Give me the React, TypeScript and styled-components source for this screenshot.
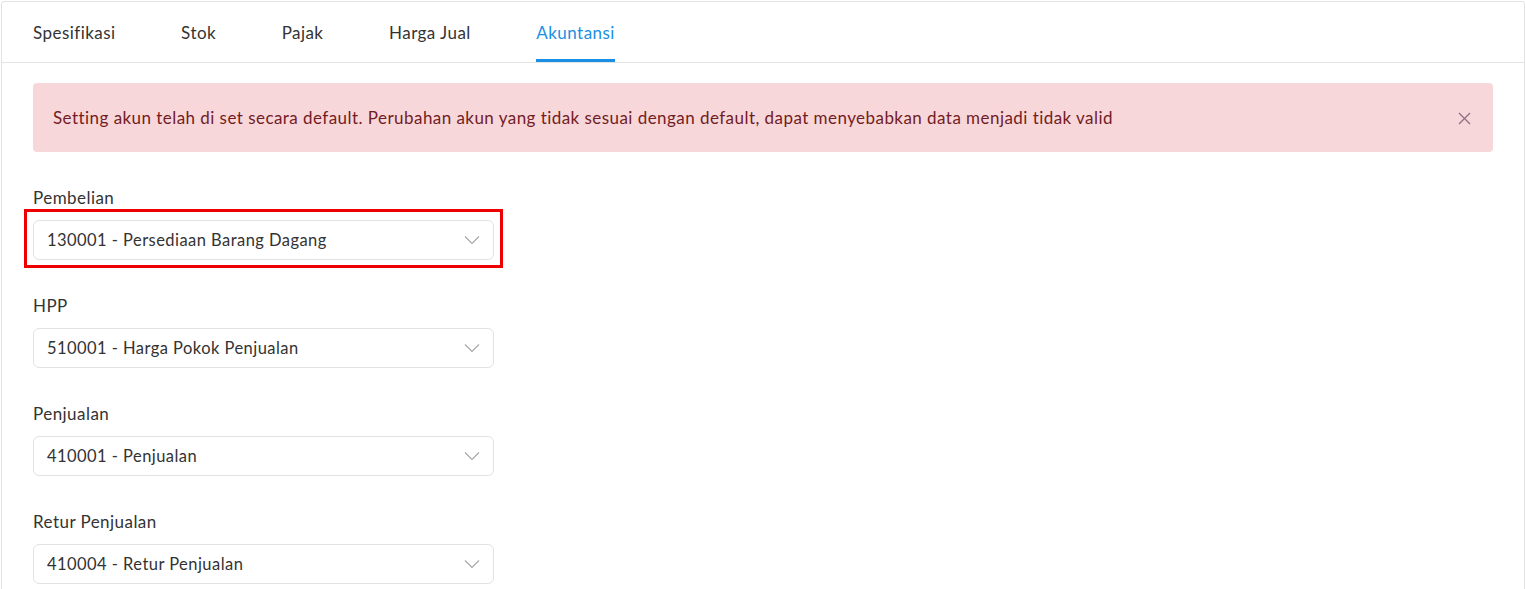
import React from "react";
import styled, { createGlobalStyle } from "styled-components";

const GlobalStyle = createGlobalStyle`
  html, body {
    margin: 0;
    padding: 0;
    background: #ffffff;
    overflow: hidden;
  }
  body {
    font-family: Lato, "Noto Sans", "Liberation Sans", sans-serif;
    color: #333333;
    letter-spacing: 0.45px;
  }
`;

const Card = styled.div`
  margin: 1px;
  border: 1px solid #e3e3e3;
  border-radius: 3px;
  height: 620px;
  background: #fff;
`;

const TabBar = styled.div`
  display: flex;
  gap: 65.6px;
  padding-left: 31px;
  height: 60px;
  border-bottom: 1px solid #e3e3e3;
`;

const Tab = styled.div<{ $active?: boolean }>`
  display: flex;
  align-items: center;
  font-size: 17px;
  color: ${(p) => (p.$active ? "#1a8fe3" : "#333333")};
  border-bottom: 3px solid ${(p) => (p.$active ? "#1a8fe3" : "transparent")};
  padding-top: 3px;
`;

const Body = styled.div`
  padding: 20px 31px 0 31px;
  display: flex;
  flex-direction: column;
  gap: 34px;
`;

const Alert = styled.div`
  display: flex;
  align-items: center;
  justify-content: space-between;
  background: #f8d7da;
  color: #721c24;
  border-radius: 4px;
  padding: 23px 22px 22px 20px;
  font-size: 17px;
  line-height: 24px;
`;

const CloseBtn = styled.span`
  display: flex;
  color: #8c6f82;
`;

const Field = styled.div`
  display: flex;
  flex-direction: column;
  gap: 10px;
  width: 461px;
`;

const Label = styled.label`
  font-size: 17px;
  line-height: 24px;
  color: #333333;
`;

const SelectWrap = styled.div`
  position: relative;
`;

const Highlight = styled.div`
  position: absolute;
  top: -11px;
  bottom: -8px;
  left: -9px;
  right: -9px;
  border: 3px solid #ee0000;
  pointer-events: none;
`;

const Select = styled.div`
  box-sizing: border-box;
  height: 40px;
  border: 1px solid #e2e2e2;
  border-radius: 6px;
  display: flex;
  align-items: center;
  justify-content: space-between;
  padding: 0 13px 0 13px;
  font-size: 16.5px;
  color: #333333;
`;

const Chevron = () => (
  <svg width="16" height="10" viewBox="0 0 16 10" fill="none">
    <path d="M1 1.5 L8 8.5 L15 1.5" stroke="#a6a6a6" strokeWidth="1.1" />
  </svg>
);

const CloseIcon = () => (
  <svg width="13" height="13" viewBox="0 0 13 13" fill="none">
    <path d="M1 1 L12 12 M12 1 L1 12" stroke="currentColor" strokeWidth="1.3" />
  </svg>
);

const tabs = ["Spesifikasi", "Stok", "Pajak", "Harga Jual", "Akuntansi"];

const fields = [
  { label: "Pembelian", value: "130001 - Persediaan Barang Dagang", marked: true },
  { label: "HPP", value: "510001 - Harga Pokok Penjualan" },
  { label: "Penjualan", value: "410001 - Penjualan" },
  { label: "Retur Penjualan", value: "410004 - Retur Penjualan" },
];

export default function App() {
  return (
    <>
      <GlobalStyle />
      <Card>
        <TabBar>
          {tabs.map((t) => (
            <Tab key={t} $active={t === "Akuntansi"}>
              {t}
            </Tab>
          ))}
        </TabBar>
        <Body>
          <Alert>
            <span>
              Setting akun telah di set secara default. Perubahan akun yang tidak sesuai dengan
              default, dapat menyebabkan data menjadi tidak valid
            </span>
            <CloseBtn>
              <CloseIcon />
            </CloseBtn>
          </Alert>
          {fields.map((f) => (
            <Field key={f.label}>
              <Label>{f.label}</Label>
              <SelectWrap>
                <Select>
                  <span>{f.value}</span>
                  <Chevron />
                </Select>
                {f.marked && <Highlight />}
              </SelectWrap>
            </Field>
          ))}
        </Body>
      </Card>
    </>
  );
}
